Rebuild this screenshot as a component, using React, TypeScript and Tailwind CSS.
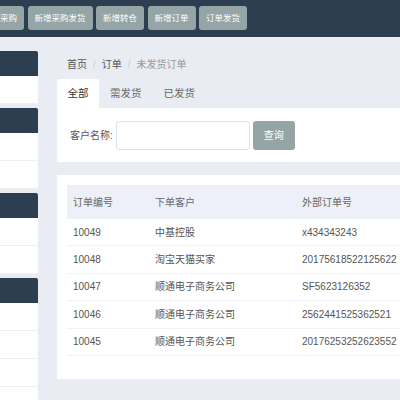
const topButtons = ["新增采购", "新增采购发货", "新增转仓", "新增订单", "订单发货"];

const sideGroups = [1, 2, 2, 6];

const rows = [
  { id: "10049", customer: "中基控股", ext: "x434343243" },
  { id: "10048", customer: "淘宝天猫买家", ext: "20175618522125622" },
  { id: "10047", customer: "顺通电子商务公司", ext: "SF5623126352" },
  { id: "10046", customer: "顺通电子商务公司", ext: "2562441525362521" },
  { id: "10045", customer: "顺通电子商务公司", ext: "20176253252623552" },
];

export default function App() {
  return (
    <div className="w-[400px] h-[400px] overflow-hidden bg-[#e9ecf3] font-['Liberation_Sans','Noto_Sans_CJK_SC',sans-serif]">
      {/* top toolbar */}
      <div className="h-[37px] bg-[#2c3e50] flex items-start pt-[6px] gap-[3.5px] ml-[-24px]">
        {topButtons.map((b) => (
          <div
            key={b}
            className="h-[24px] px-[7px] flex items-center rounded-[3px] bg-[#95a5a6] text-white text-[8.5px] whitespace-nowrap shrink-0"
          >
            {b}
          </div>
        ))}
      </div>

      <div className="flex">
        {/* sidebar */}
        <div className="w-[38px] shrink-0 mt-[14px] flex flex-col gap-[4px]">
          {sideGroups.map((n, gi) => (
            <div key={gi} className="flex flex-col">
              <div className="h-[25px] bg-[#2c3e50] rounded-tr-[2px]" />
              {Array.from({ length: n }).map((_, i) => (
                <div key={i} className="h-[28px] bg-white border-b border-[#f0f0f0]" />
              ))}
            </div>
          ))}
        </div>

        {/* main */}
        <div className="ml-[19px] w-[420px] shrink-0 pt-[19px]">
          <div className="h-[16px] flex items-center pl-[10px] text-[10px] gap-[6px]">
            <span className="text-[#555]">首页</span>
            <span className="text-[#ccc]">/</span>
            <span className="text-[#555]">订单</span>
            <span className="text-[#ccc]">/</span>
            <span className="text-[#999]">未发货订单</span>
          </div>

          <div className="mt-[7px] flex h-[29px] text-[10.5px]">
            <div className="px-[10.5px] flex items-center bg-white rounded-t-[2px] text-[#333]">全部</div>
            <div className="px-[11px] flex items-center text-[#666]">需发货</div>
            <div className="px-[11px] flex items-center text-[#666]">已发货</div>
          </div>

          <div className="bg-white h-[54px] flex items-center pl-[13px] text-[10px]">
            <span className="text-[#555]">客户名称:</span>
            <div className="ml-[3px] w-[134px] h-[29px] border border-[#dbe3ee] rounded-[3px] bg-white" />
            <div className="ml-[3px] w-[42px] h-[29px] rounded-[3px] bg-[#95a5a6] text-white flex items-center justify-center">
              查询
            </div>
          </div>

          <div className="mt-[13px] bg-white h-[204px] pt-[10px] pl-[10px]">
            <div className="flex h-[34px] items-center bg-[#edf0f8] text-[10px] text-[#666]">
              <div className="w-[88px] pl-[6px]">订单编号</div>
              <div className="w-[147px]">下单客户</div>
              <div>外部订单号</div>
            </div>
            {rows.map((r) => (
              <div
                key={r.id}
                className="flex h-[27.4px] items-center border-b border-[#f0f2f5] text-[10px] text-[#555] whitespace-nowrap"
              >
                <div className="w-[88px] pl-[6px]">{r.id}</div>
                <div className="w-[147px]">{r.customer}</div>
                <div>{r.ext}</div>
              </div>
            ))}
          </div>
        </div>
      </div>
    </div>
  );
}
